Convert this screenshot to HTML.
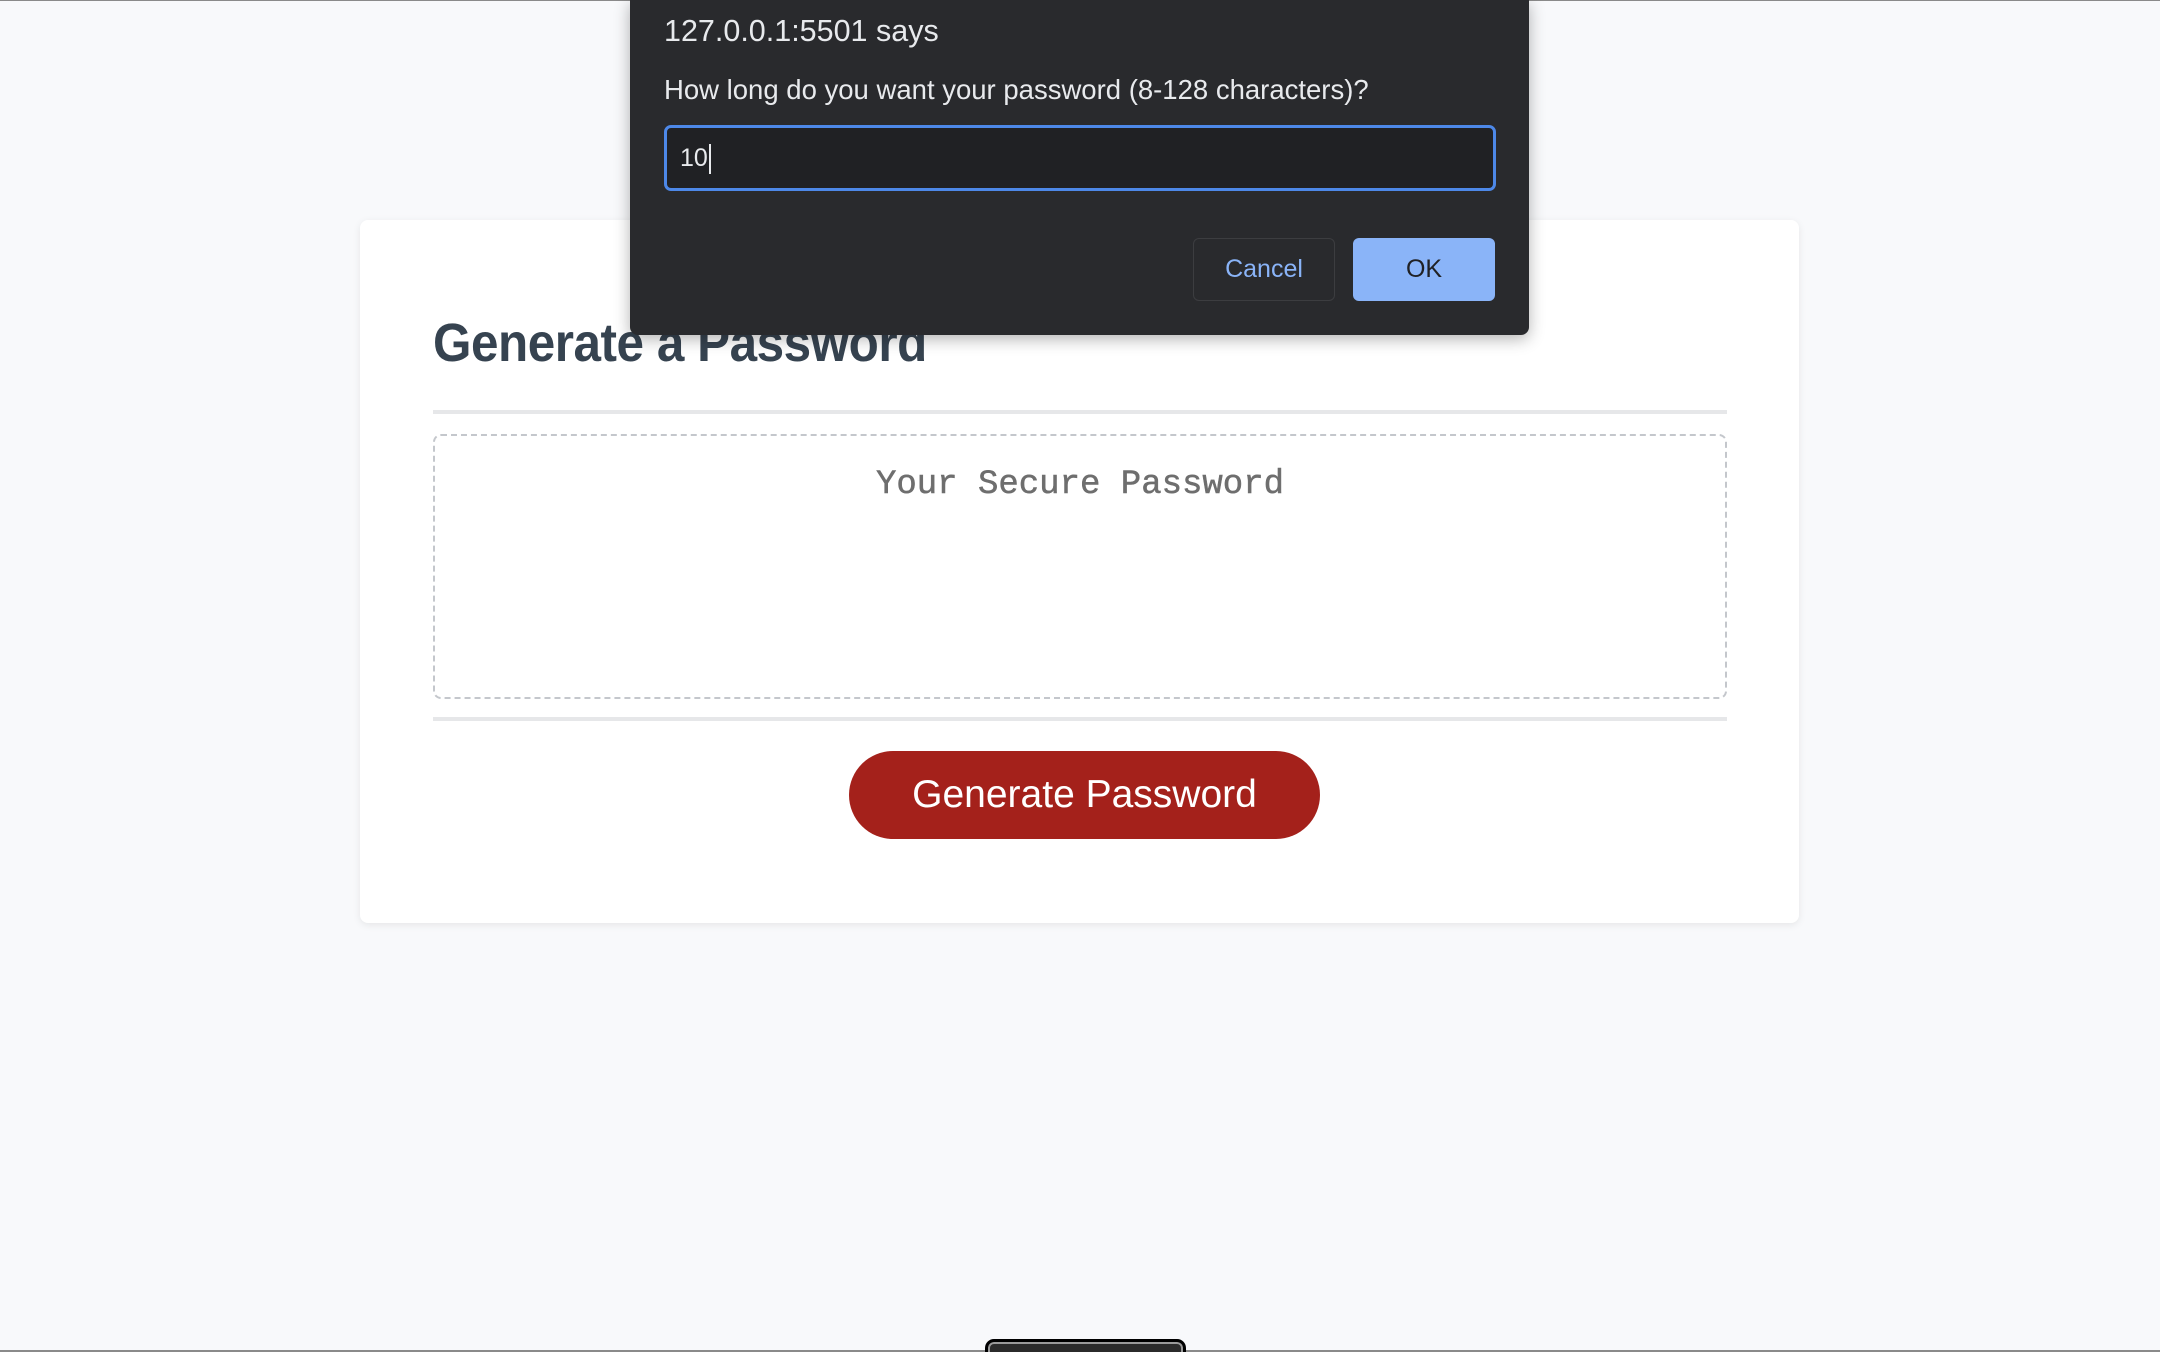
<!DOCTYPE html>
<html><head><meta charset="utf-8"><style>
*{margin:0;padding:0;box-sizing:border-box}
html,body{width:2160px;height:1352px;overflow:hidden;background:#f8f9fb;font-family:"Liberation Sans",sans-serif;position:relative}
.topline{position:absolute;left:0;top:0;width:2160px;height:1px;background:#8a8a8a}
.card{position:absolute;left:360px;top:220px;width:1439px;height:703px;background:#fff;border-radius:8px;box-shadow:0 2px 8px rgba(0,0,0,0.08)}
h1{position:absolute;left:433px;top:313px;font-size:54px;font-weight:bold;color:#364350;line-height:60px;letter-spacing:-0.5px;transform:scaleX(0.915);transform-origin:left top;white-space:nowrap}
.hr{position:absolute;left:433px;width:1294px;height:4px;background:#e6e7e9}
.box{position:absolute;left:433px;top:434px;width:1294px;height:265px;border:2px dashed #c4c7cc;border-radius:8px}
.ph{position:absolute;left:433px;top:462px;width:1294px;text-align:center;font-family:"Liberation Mono",monospace;font-size:34px;color:#6e6e6e;line-height:46px;-webkit-text-stroke:0.5px #6e6e6e}
.btn{position:absolute;left:849px;top:751px;width:471px;height:88px;border-radius:44px;background:#a4211b;color:#fff;font-size:39px;text-align:center;line-height:88px}
.dlg{position:absolute;left:630px;top:0;width:899px;height:335px;background:#292a2d;border-radius:0 0 8px 8px;box-shadow:0 4px 16px rgba(0,0,0,0.3);color:#e8eaed}
.t{position:absolute;left:34px;top:12px;font-size:30.5px;line-height:38px;white-space:nowrap}
.m{position:absolute;left:34px;top:72px;font-size:27.5px;line-height:36px;white-space:nowrap}
.inp{position:absolute;left:34px;top:125px;width:832px;height:66px;border:3px solid #4d88e8;border-radius:7px;background:#202124;font-size:25px;line-height:60px;padding-left:13px;color:#e8eaed}
.cur{display:inline-block;width:2px;height:30px;background:#e8eaed;vertical-align:middle;margin-left:1px}
.cancel{position:absolute;left:563px;top:238px;width:142px;height:63px;border:1px solid #3c3d40;border-radius:6px;color:#8ab4f8;font-size:25px;text-align:center;line-height:61px}
.ok{position:absolute;left:723px;top:238px;width:142px;height:63px;background:#8ab4f8;border-radius:6px;color:#202124;font-size:25px;text-align:center;line-height:63px}
.tab{position:absolute;left:985px;top:1339px;width:201px;height:20px;background:#2b2b2b;border:3px solid #000;border-radius:9px 9px 0 0;box-shadow:inset 0 0 0 2px #9a9a9a}
.botline{position:absolute;left:0;top:1350px;width:2160px;height:2px;background:#8a8a8a}
</style></head><body>
<div class="topline"></div>
<div class="card"></div>
<h1>Generate a Password</h1>
<div class="hr" style="top:410px"></div>
<div class="box"></div>
<div class="ph">Your Secure Password</div>
<div class="hr" style="top:717px"></div>
<div class="btn">Generate Password</div>
<div class="dlg">
<div class="t">127.0.0.1:5501 says</div>
<div class="m">How long do you want your password (8-128 characters)?</div>
<div class="inp">10<span class="cur"></span></div>
<div class="cancel">Cancel</div>
<div class="ok">OK</div>
</div>
<div class="botline"></div>
<div class="tab"></div>
</body></html>
